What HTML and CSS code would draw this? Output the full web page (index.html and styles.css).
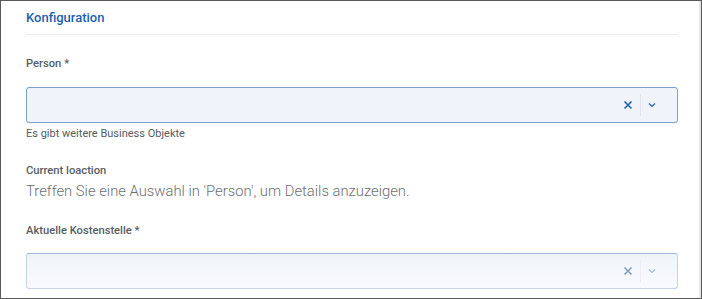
FILE: index.html
```html
<!DOCTYPE html>
<html lang="de">
<head>
    <meta charset="UTF-8">
    <title>Konfiguration</title>
    <link rel="stylesheet" href="styles.css">
</head>
<body>

<div class="frame">
    <h2 class="section-title">Konfiguration</h2>

    <div class="field field-person">
        <label class="field-label">Person *</label>
        <div class="select">
            <div class="select-value"></div>
            <span class="select-clear">
                <svg width="10" height="10" viewBox="0 0 10 10"><path d="M1.5 1.5 L8.5 8.5 M8.5 1.5 L1.5 8.5" /></svg>
            </span>
            <span class="select-sep"></span>
            <span class="select-arrow">
                <svg width="8" height="6" viewBox="0 0 8 6"><path d="M1 1.5 L4 4.5 L7 1.5" /></svg>
            </span>
        </div>
        <div class="field-hint">Es gibt weitere Business Objekte</div>
    </div>

    <div class="field field-location">
        <label class="field-label">Current loaction</label>
        <div class="field-text">Treffen Sie eine Auswahl in 'Person', um Details anzuzeigen.</div>
    </div>

    <div class="field field-cost">
        <label class="field-label">Aktuelle Kostenstelle *</label>
        <div class="select select-muted">
            <div class="select-value"></div>
            <span class="select-clear">
                <svg width="10" height="10" viewBox="0 0 10 10"><path d="M1.5 1.5 L8.5 8.5 M8.5 1.5 L1.5 8.5" /></svg>
            </span>
            <span class="select-sep"></span>
            <span class="select-arrow">
                <svg width="8" height="6" viewBox="0 0 8 6"><path d="M1 1.5 L4 4.5 L7 1.5" /></svg>
            </span>
        </div>
    </div>
</div>

</body>
</html>
```

FILE: styles.css
```css
* { box-sizing: border-box; }
body {
    margin: 0;
    font-family: Roboto, "Liberation Sans", Arial, sans-serif;
    background: #fff;
}
.frame {
    width: 702px;
    height: 299px;
    border: 1px solid #5a5a5a;
    box-shadow: inset -2px 0 0 #e6e6e6;
    padding: 7px 23px 0 25px;
    overflow: hidden;
}
.section-title {
    margin: 0;
    font-size: 13px;
    font-weight: 500;
    line-height: 20px;
    color: #1d5fae;
    padding-bottom: 6px;
    border-bottom: 1px solid #ececec;
}
.field-label {
    display: block;
    font-size: 11.2px;
    font-weight: 500;
    line-height: 16px;
    color: #565d65;
}
.field-person { margin-top: 21px; }
.field-location { margin-top: 22px; }
.field-cost { margin-top: 22px; }
.select {
    margin-top: 15px;
    height: 36px;
    display: flex;
    align-items: center;
    background: #f0f4fa;
    border: 1px solid #7d9fc9;
    border-radius: 3px;
}
.field-cost .select { margin-top: 14px; }
.select-value { flex: 1; }
.select-clear {
    width: 20px;
    display: flex;
    justify-content: center;
}
.select-clear svg path {
    stroke: #1d5fae;
    stroke-width: 1.6;
    fill: none;
}
.select-sep {
    width: 1px;
    height: 22px;
    margin-left: 2px;
    background: #e1e4e8;
}
.select-arrow {
    width: 22px;
    margin-right: 14px;
    display: flex;
    justify-content: center;
}
.select-arrow svg path {
    stroke: #1d5fae;
    stroke-width: 1.2;
    fill: none;
}
.select-muted {
    border-color: #c5d5e9;
    border-top-color: #9db7d8;
    background: linear-gradient(#f0f4f9, #f9fbfd);
}
.select-muted .select-clear svg path { stroke: #7f9cc2; }
.select-muted .select-arrow svg path { stroke: #a9bdd8; }
.select-muted .select-sep { background: #eceef0; }
.field-hint {
    margin-top: 4px;
    font-size: 11px;
    line-height: 14px;
    color: #555b62;
}
.field-text {
    margin-top: 2px;
    font-size: 14.8px;
    font-weight: 300;
    line-height: 20px;
    color: #6b6f74;
}
```
